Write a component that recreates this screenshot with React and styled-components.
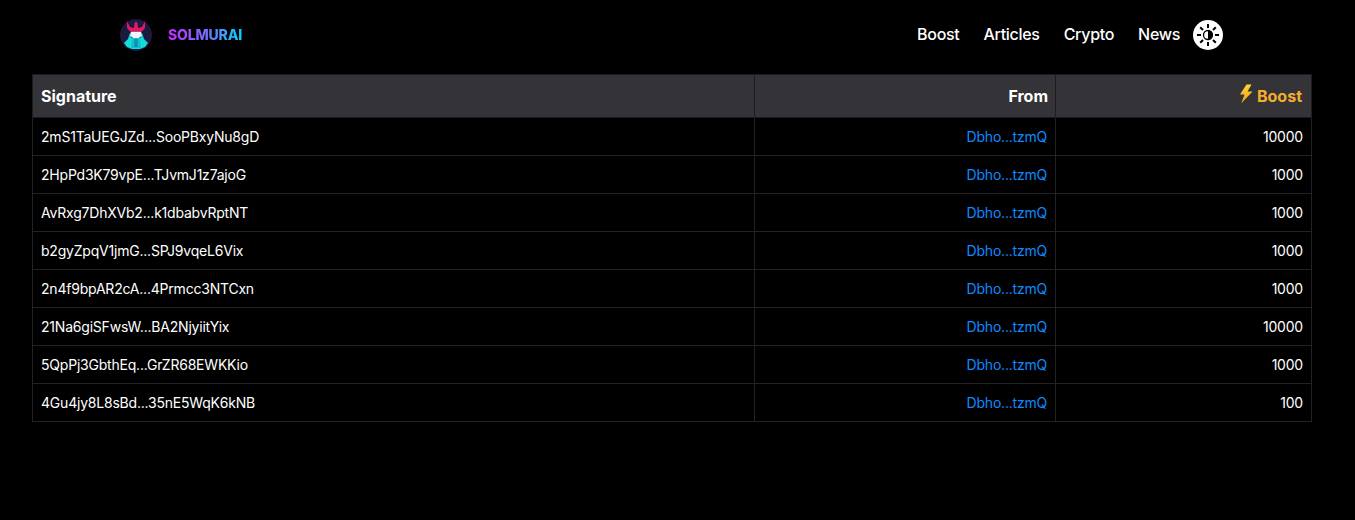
import React from "react";
import styled, { createGlobalStyle } from "styled-components";

const Global = createGlobalStyle`
  html, body { margin: 0; padding: 0; background: #000; }
  body { font-family: Inter, "Liberation Sans", sans-serif; color: #fff; }
`;

const Page = styled.div`
  width: 1355px;
  height: 520px;
  background: #000;
  overflow: hidden;
`;

const Navbar = styled.header`
  height: 74px;
  box-sizing: border-box;
  padding: 0 132px 5px 120px;
  display: flex;
  align-items: center;
  justify-content: space-between;
`;

const Brand = styled.a`
  display: flex;
  align-items: center;
  gap: 16px;
`;

const BrandName = styled.span`
  font-size: 14px;
  font-weight: 800;
  letter-spacing: -0.15px;
  background: linear-gradient(90deg, #c42cff 0%, #6f74ff 55%, #00d4ff 100%);
  -webkit-background-clip: text;
  background-clip: text;
  color: transparent;
`;

const Nav = styled.nav`
  display: flex;
  align-items: center;
`;

const NavLink = styled.a`
  font-size: 16px;
  line-height: 18px;
  margin-top: -2px;
  font-weight: 500;
  letter-spacing: -0.3px;
  color: #fff;
  margin-right: 24px;
  &:nth-last-of-type(1) { margin-right: 13px; }
`;

const ThemeToggle = styled.button`
  width: 30px;
  height: 30px;
  padding: 0;
  border: 0;
  border-radius: 50%;
  background: #fff;
  display: flex;
  align-items: center;
  justify-content: center;
`;

const TableWrap = styled.div`
  padding: 0 44px 0 32px;
`;

const Table = styled.table`
  width: 1279px;
  border-collapse: collapse;
  table-layout: fixed;
  border: 1px solid #26262a;
`;

const Th = styled.th`
  height: 43px;
  padding: 0 ${(p) => p.$inset || 8}px 0 8px;
  box-sizing: border-box;
  background: #333338;
  border: 1px solid #1c1c1f;
  font-size: 16px;
  font-weight: 700;
  text-align: ${(p) => (p.$right ? "right" : "left")};
  color: ${(p) => p.$color || "#fff"};
`;

const BoostLabel = styled.span`
  display: inline-flex;
  align-items: center;
  gap: 3px;
`;

const Td = styled.td`
  height: 38px;
  padding: 0 8px;
  box-sizing: border-box;
  border: 1px solid #222225;
  font-size: 14px;
  font-weight: 400;
  letter-spacing: -0.21px;
  text-align: ${(p) => (p.$right ? "right" : "left")};
  color: #fff;
`;

const AddressLink = styled.a`
  color: #0d8bff;
`;

const BoltIcon = styled.svg`
  width: 15px;
  height: 20px;
  margin-bottom: 4px;
`;

const Logo = () => (
  <svg width="32" height="32" viewBox="0 0 32 32" aria-hidden="true">
    <circle cx="16" cy="16" r="16" fill="#1a1a40" />
    <path d="M10 14L8 20l-4 4 3 4 5 2h8l5-2 3-4-4-4-2-6-1 4-2 2h-6l-2-2z" fill="#14dcd6" />
    <path d="M12 19h8l1 10H11z" fill="#10bfd2" />
    <path d="M14.500 20h3l.5 8h-4z" fill="#0a94b4" />
    <path d="M11 12.500h10l1 4-3 2.500h-6l-3-2.500z" fill="#f4f4ff" />
    <path d="M7 2l3 6 4 1 .5-5L16 2.500 17.500 4l.5 5 4-1 3-6v7l-3 3.500H10L7 9z" fill="#e5195f" />
  </svg>
);

const SunIcon = () => (
  <svg width="24" height="24" viewBox="0 0 24 24" aria-hidden="true">
    <g stroke="#000" strokeWidth="2">
      <line x1="12" y1="1" x2="12" y2="5" />
      <line x1="12" y1="19" x2="12" y2="23" />
      <line x1="1" y1="12" x2="5" y2="12" />
      <line x1="19" y1="12" x2="23" y2="12" />
      <line x1="4.200" y1="4.200" x2="7" y2="7" />
      <line x1="17" y1="17" x2="19.800" y2="19.800" />
      <line x1="4.200" y1="19.800" x2="7" y2="17" />
      <line x1="17" y1="7" x2="19.800" y2="4.200" />
    </g>
    <circle cx="12" cy="12" r="4.500" fill="#fff" stroke="#000" strokeWidth="1.300" />
    <path d="M12 7.500a4.500 4.500 0 0 1 0 9z" fill="#000" />
  </svg>
);

const Bolt = () => (
  <BoltIcon viewBox="0 0 15 20" aria-hidden="true">
    <defs>
      <linearGradient id="boltFill" x1="0" y1="0" x2="0" y2="1">
        <stop offset="0" stopColor="#ffd83a" />
        <stop offset="1" stopColor="#f29a16" />
      </linearGradient>
    </defs>
    <path d="M7.500 0.500L1 10.500h4.500L2.200 19.500 13.500 7.500H8.500L12.500 0.500z" fill="url(#boltFill)" />
  </BoltIcon>
);

const rows = [
  ["2mS1TaUEGJZd...SooPBxyNu8gD", "10000"],
  ["2HpPd3K79vpE...TJvmJ1z7ajoG", "1000"],
  ["AvRxg7DhXVb2...k1dbabvRptNT", "1000"],
  ["b2gyZpqV1jmG...SPJ9vqeL6Vix", "1000"],
  ["2n4f9bpAR2cA...4Prmcc3NTCxn", "1000"],
  ["21Na6giSFwsW...BA2NjyiitYix", "10000"],
  ["5QpPj3GbthEq...GrZR68EWKKio", "1000"],
  ["4Gu4jy8L8sBd...35nE5WqK6kNB", "100"],
];

export default function App() {
  return (
    <Page>
      <Global />
      <Navbar>
        <Brand>
          <Logo />
          <BrandName>SOLMURAI</BrandName>
        </Brand>
        <Nav>
          <NavLink>Boost</NavLink>
          <NavLink>Articles</NavLink>
          <NavLink>Crypto</NavLink>
          <NavLink>News</NavLink>
          <ThemeToggle aria-label="Toggle theme">
            <SunIcon />
          </ThemeToggle>
        </Nav>
      </Navbar>
      <TableWrap>
        <Table>
          <colgroup>
            <col style={{ width: 722 }} />
            <col style={{ width: 301 }} />
            <col style={{ width: 256 }} />
          </colgroup>
          <thead>
            <tr>
              <Th>Signature</Th>
              <Th $right $inset={7}>From</Th>
              <Th $right $inset={9} $color="#f6ad2b">
                <BoostLabel>
                  <Bolt />
                  Boost
                </BoostLabel>
              </Th>
            </tr>
          </thead>
          <tbody>
            {rows.map(([signature, amount]) => (
              <tr key={signature}>
                <Td>{signature}</Td>
                <Td $right>
                  <AddressLink>Dbho...tzmQ</AddressLink>
                </Td>
                <Td $right>{amount}</Td>
              </tr>
            ))}
          </tbody>
        </Table>
      </TableWrap>
    </Page>
  );
}
